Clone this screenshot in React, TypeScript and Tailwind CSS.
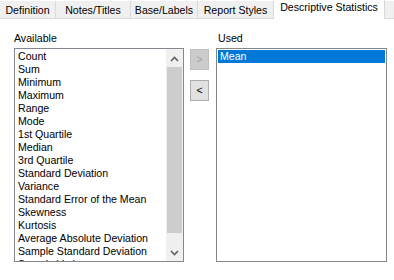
import React from "react";

const font = { fontFamily: '"Liberation Sans", Arial, sans-serif' };

const available = [
  "Count",
  "Sum",
  "Minimum",
  "Maximum",
  "Range",
  "Mode",
  "1st Quartile",
  "Median",
  "3rd Quartile",
  "Standard Deviation",
  "Variance",
  "Standard Error of the Mean",
  "Skewness",
  "Kurtosis",
  "Average Absolute Deviation",
  "Sample Standard Deviation",
  "Sample Variance",
];

const tabs = [
  { label: "Definition", w: "w-[56px]" },
  { label: "Notes/Titles", w: "w-[75px]" },
  { label: "Base/Labels", w: "w-[67px]" },
  { label: "Report Styles", w: "w-[76px]" },
];

function Chevron({ up }: { up?: boolean }) {
  return (
    <svg width="9" height="6" viewBox="0 0 9 6">
      <path
        d={up ? "M1 5 L4.5 1.5 L8 5" : "M1 1 L4.5 4.5 L8 1"}
        fill="none"
        stroke="#606060"
        strokeWidth="1.6"
      />
    </svg>
  );
}

export default function App() {
  return (
    <div className="w-[394px] h-[280px] bg-white overflow-hidden text-[10.6px] text-black" style={font}>
      {/* tab strip */}
      <div className="flex items-end h-[19px]">
        {tabs.map((t) => (
          <div
            key={t.label}
            className={`${t.w} h-[18px] shrink-0 bg-[#f0f0f0] border-r border-b border-[#d9d9d9] flex items-center justify-center leading-none pt-[1px]`}
          >
            {t.label}
          </div>
        ))}
        <div className="w-[111px] h-[19px] shrink-0 bg-white border-r border-[#d9d9d9] flex items-center justify-center leading-none pb-[4px]">
          Descriptive Statistics
        </div>
        <div className="flex-1 h-[18px] bg-[#f0f0f0] border-b border-[#d9d9d9]" />
      </div>

      {/* body */}
      <div className="flex pl-[14px] pt-[13px]">
        <div className="w-[170px] flex flex-col">
          <div className="h-[16px] leading-[13px]">Available</div>
          <div className="h-[214px] border border-[#828790] flex">
            <div className="flex-1 overflow-hidden pt-[1px] pl-[3px]">
              {available.map((a) => (
                <div key={a} className="h-[13px] leading-[13px] whitespace-nowrap">
                  {a}
                </div>
              ))}
            </div>
            <div className="w-[17px] bg-[#f0f0f0] flex flex-col pt-[1px]">
              <div className="h-[17px] flex items-center justify-center">
                <Chevron up />
              </div>
              <div className="h-[166px] mx-px bg-[#cdcdcd]" />
              <div className="flex-1" />
              <div className="h-[17px] flex items-center justify-center">
                <Chevron />
              </div>
            </div>
          </div>
        </div>

        <div className="w-[19px] ml-[6px] pt-[17px] flex flex-col gap-[10px]">
          <div className="h-[21px] bg-[#cccccc] border border-[#bfbfbf] flex items-center justify-center text-[#a0a0a0] leading-none">
            &gt;
          </div>
          <div className="h-[21px] bg-[#e1e1e1] border border-[#adadad] flex items-center justify-center leading-none">
            &lt;
          </div>
        </div>

        <div className="w-[171px] ml-[7px] flex flex-col">
          <div className="h-[16px] leading-[13px] pl-[2px]">Used</div>
          <div className="h-[214px] border border-[#828790] p-[1px]">
            <div className="h-[13px] leading-[13px] bg-[#0078d7] text-white pl-[2px]">Mean</div>
          </div>
        </div>
      </div>
    </div>
  );
}
